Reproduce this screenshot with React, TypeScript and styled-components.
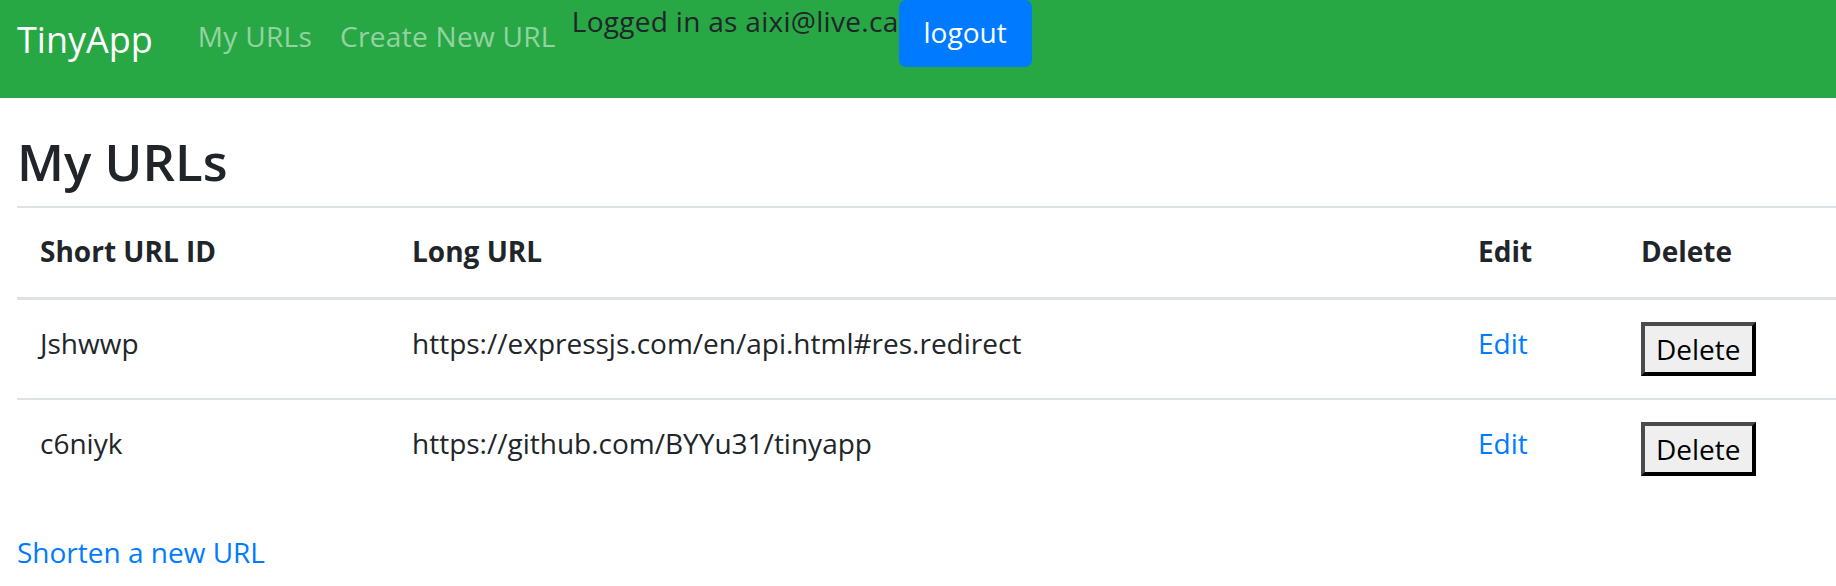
import React from "react";
import styled, { createGlobalStyle } from "styled-components";

const GlobalStyle = createGlobalStyle`
  html, body {
    margin: 0;
    padding: 0;
    background: #ffffff;
  }
  body {
    font-family: "Open Sans", "Noto Sans", sans-serif;
    font-size: 28px;
    line-height: 42px;
    color: #212529;
    overflow: hidden;
  }
  * {
    box-sizing: border-box;
  }
`;

const Navbar = styled.nav`
  display: flex;
  align-items: flex-start;
  height: 98px;
  padding-left: 17px;
  background: #28a745;
`;

const NavMain = styled.div`
  display: flex;
  align-items: flex-start;
  padding-top: 14px;
`;

const Brand = styled.a`
  font-size: 36px;
  line-height: 52px;
  color: #ffffff;
  text-decoration: none;
  margin-right: 31px;
`;

const NavList = styled.ul`
  display: flex;
  list-style: none;
  margin: 1px 0 0;
  padding: 0;
`;

const NavLink = styled.a`
  display: block;
  padding: 0 14px;
  color: rgba(255, 255, 255, 0.5);
  text-decoration: none;
  letter-spacing: 0.3px;
`;

const UserBox = styled.div`
  display: flex;
  align-items: flex-start;
  margin-left: 2px;
`;

const UserText = styled.span`
  color: #212529;
  line-height: 42px;
  letter-spacing: 0.3px;
`;

const LogoutButton = styled.button`
  font-family: "Open Sans", "Noto Sans", sans-serif;
  font-size: 28px;
  line-height: 42px;
  height: 67px;
  padding: 11px 25px 14px;
  color: #ffffff;
  background: #007bff;
  border: none;
  border-radius: 7px;
  cursor: pointer;
`;

const Container = styled.main`
  padding: 33px 0 0 17px;
`;

const Title = styled.h1`
  margin: 0 0 14px;
  font-size: 51px;
  line-height: 61px;
  font-weight: 600;
  color: #212529;
`;

const Table = styled.table`
  width: 100%;
  border-collapse: collapse;
  table-layout: fixed;
  margin-bottom: 33px;
`;

const HeadCell = styled.th`
  text-align: left;
  font-weight: 700;
  padding: 22px 23px 25px;
  border-top: 2px solid #dee2e6;
  border-bottom: 3px solid #dee2e6;
  vertical-align: bottom;
`;

const Cell = styled.td`
  padding: 22px 23px;
  border-top: 2px solid #dee2e6;
  vertical-align: top;
`;

const BlueLink = styled.a`
  color: #007bff;
  text-decoration: none;
`;

const DeleteButton = styled.button`
  font-family: "Open Sans", "Noto Sans", sans-serif;
  font-size: 28px;
  line-height: 42px;
  height: 54px;
  padding: 2px 11px;
  color: #000000;
  background: #efefef;
  border-width: 4px;
  border-style: solid;
  border-color: #4a4a4a #000000 #000000 #4a4a4a;
`;

const urls = [
  { id: "Jshwwp", long: "https://expressjs.com/en/api.html#res.redirect" },
  { id: "c6niyk", long: "https://github.com/BYYu31/tinyapp" },
];

export default function App() {
  return (
    <>
      <GlobalStyle />
      <Navbar>
        <NavMain>
          <Brand href="#">TinyApp</Brand>
          <NavList>
            <li>
              <NavLink href="#">My URLs</NavLink>
            </li>
            <li>
              <NavLink href="#">Create New URL</NavLink>
            </li>
          </NavList>
        </NavMain>
        <UserBox>
          <UserText>Logged in as aixi@live.ca</UserText>
          <LogoutButton>logout</LogoutButton>
        </UserBox>
      </Navbar>
      <Container>
        <Title>My URLs</Title>
        <Table>
          <colgroup>
            <col style={{ width: 372 }} />
            <col style={{ width: 1066 }} />
            <col style={{ width: 163 }} />
            <col />
          </colgroup>
          <thead>
            <tr>
              <HeadCell>Short URL ID</HeadCell>
              <HeadCell>Long URL</HeadCell>
              <HeadCell>Edit</HeadCell>
              <HeadCell>Delete</HeadCell>
            </tr>
          </thead>
          <tbody>
            {urls.map((u) => (
              <tr key={u.id}>
                <Cell>{u.id}</Cell>
                <Cell>{u.long}</Cell>
                <Cell>
                  <BlueLink href="#">Edit</BlueLink>
                </Cell>
                <Cell>
                  <DeleteButton>Delete</DeleteButton>
                </Cell>
              </tr>
            ))}
          </tbody>
        </Table>
        <BlueLink href="#">Shorten a new URL</BlueLink>
      </Container>
    </>
  );
}
